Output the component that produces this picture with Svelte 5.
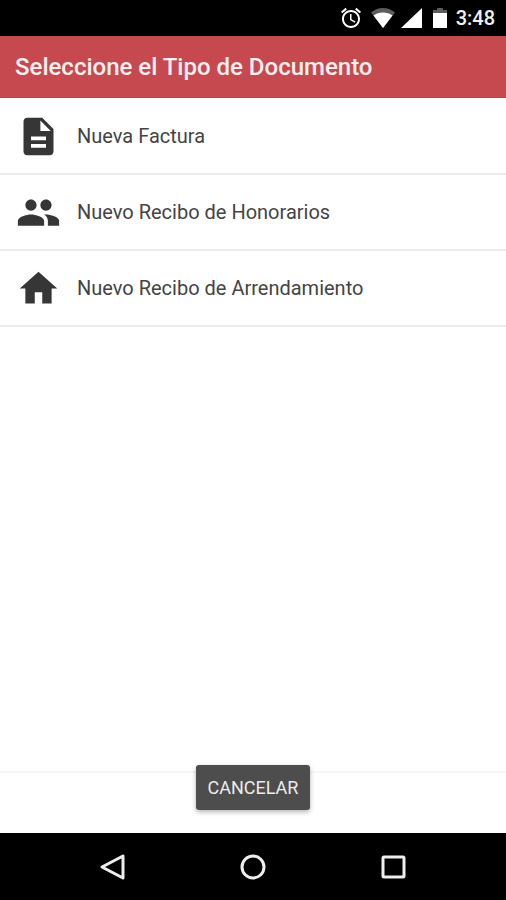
<script>
    const options = [
        {
            label: 'Nueva Factura',
            icon: 'M14 2H6c-1.1 0-1.99.9-1.99 2L4 20c0 1.1.89 2 1.99 2H18c1.1 0 2-.9 2-2V8l-6-6zm2 16H8v-2h8v2zm0-4H8v-2h8v2zm-3-5V3.5L18.5 9H13z'
        },
        {
            label: 'Nuevo Recibo de Honorarios',
            icon: 'M16 11c1.66 0 2.99-1.34 2.99-3S17.66 5 16 5s-3 1.34-3 3 1.34 3 3 3zm-8 0c1.66 0 2.99-1.34 2.99-3S9.66 5 8 5 5 6.34 5 8s1.34 3 3 3zm0 2c-2.33 0-7 1.17-7 3.5V19h14v-2.5c0-2.33-4.67-3.5-7-3.5zm8 0c-.29 0-.62.02-.97.05 1.16.84 1.97 1.97 1.97 3.45V19h6v-2.5c0-2.33-4.67-3.5-7-3.5z'
        },
        {
            label: 'Nuevo Recibo de Arrendamiento',
            icon: 'M10 20v-6h4v6h5v-8h3L12 3 2 12h3v8z'
        }
    ];
</script>

<div class="screen">
    <div class="status">
        <svg class="alarm" viewBox="0 0 24 24" width="24" height="24">
            <path d="M22 5.72l-4.6-3.86-1.29 1.53 4.6 3.86L22 5.72zM7.88 3.39L6.6 1.86 2 5.71l1.29 1.53 4.59-3.85zM12.5 8H11v6l4.75 2.85.75-1.23-4-2.37V8zM12 4c-4.97 0-9 4.03-9 9s4.02 9 9 9c4.97 0 9-4.03 9-9s-4.03-9-9-9zm0 16c-3.87 0-7-3.13-7-7s3.13-7 7-7 7 3.13 7 7-3.13 7-7 7z" />
        </svg>
        <svg class="wifi" viewBox="0 0 24 20" width="24" height="20">
            <path class="dim" d="M12 20L0 4.5C3 1.8 7.3 0 12 0s9 1.8 12 4.5z" />
            <path d="M12 20L2.500 7.500C5 5.500 8.500 4.500 12 4.500s7 1 9.500 3z" />
        </svg>
        <svg class="signal" viewBox="0 0 21 20" width="21" height="20">
            <path d="M0 20L21 0v20z" />
        </svg>
        <svg class="battery" viewBox="0 0 14 20" width="14" height="20">
            <path class="dim" d="M4 0h6v2h4v4H0V2h4z" />
            <path d="M0 5h14v15H0z" />
        </svg>
        <span class="time">3:48</span>
    </div>

    <header>
        <h1>Seleccione el Tipo de Documento</h1>
    </header>

    <main>
        {#each options as option}
            <button class="item">
                <svg viewBox="0 0 24 24" width="45" height="45" aria-hidden="true">
                    <path d={option.icon} />
                </svg>
                <span>{option.label}</span>
            </button>
        {/each}
    </main>

    <footer>
        <button class="cancel">CANCELAR</button>
    </footer>

    <nav>
        <button aria-label="Atrás">
            <svg viewBox="0 0 28 28" width="28" height="28">
                <path d="M24 3v22L3 14z" />
            </svg>
        </button>
        <button aria-label="Inicio">
            <svg viewBox="0 0 28 28" width="28" height="28">
                <circle cx="14" cy="14" r="11" />
            </svg>
        </button>
        <button aria-label="Recientes">
            <svg viewBox="0 0 28 28" width="28" height="28">
                <rect x="4" y="4" width="21" height="20" rx="1" />
            </svg>
        </button>
    </nav>
</div>

<style>
    :global(body) {
        margin: 0;
    }

    .screen {
        display: flex;
        flex-direction: column;
        min-height: 100vh;
        background: #fff;
        font-family: Roboto, "Liberation Sans", sans-serif;
    }

    button {
        margin: 0;
        border: none;
        font-family: inherit;
        cursor: pointer;
    }

    .status {
        display: flex;
        align-items: center;
        justify-content: flex-end;
        height: 36px;
        padding: 0 11px;
        box-sizing: border-box;
        background: #000;
        color: #f0f0f0;
    }

    .status svg {
        fill: #fff;
    }

    .status .dim {
        fill: #5c5c5c;
    }

    .wifi {
        margin-left: 8px;
    }

    .signal {
        margin-left: 6px;
    }

    .battery {
        margin-left: 11px;
    }

    .time {
        margin-left: 9px;
        font-size: 20px;
        font-weight: 500;
        line-height: 24px;
    }

    header {
        display: flex;
        align-items: center;
        height: 62px;
        padding: 0 15px;
        box-sizing: border-box;
        border-bottom: 1px solid #c23c48;
        background: #c64950;
    }

    h1 {
        margin: 0;
        color: #fdf0f0;
        font-size: 24px;
        font-weight: 500;
        line-height: 32px;
    }

    main {
        flex: 1;
        padding-top: 1px;
    }

    .item {
        display: flex;
        align-items: center;
        gap: 16px;
        width: 100%;
        height: 76px;
        padding: 0 16px;
        border-bottom: 2px solid #ececec;
        background: #fff;
        color: #444;
        font-size: 20px;
        line-height: 25px;
        text-align: left;
    }

    .item svg {
        flex: none;
        fill: #363636;
    }

    footer {
        display: flex;
        justify-content: center;
        align-items: flex-start;
        height: 62px;
        box-sizing: border-box;
        border-top: 2px solid #f7f7f7;
    }

    /* the button sits over the top edge of the toolbar */
    .cancel {
        height: 45px;
        margin-top: -8px;
        padding: 0 12px;
        border-radius: 3px;
        background: #4d4d4d;
        color: #ececec;
        font-size: 18px;
        line-height: 24px;
        box-shadow: 0 2px 5px rgba(0, 0, 0, 0.3);
    }

    nav {
        display: flex;
        justify-content: center;
        align-items: center;
        gap: 112px;
        height: 67px;
        background: #000;
    }

    nav button {
        display: flex;
        padding: 0;
        background: none;
    }

    nav svg {
        fill: none;
        stroke: #eee;
        stroke-width: 3;
        stroke-linejoin: round;
    }
</style>
